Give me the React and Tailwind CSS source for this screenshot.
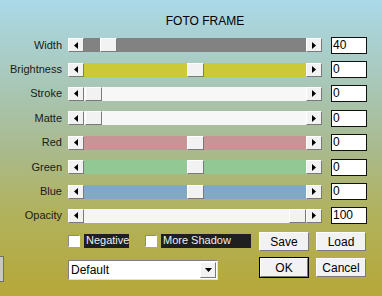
const font = { fontFamily: '"Liberation Sans", Arial, sans-serif' }

const Arrow = ({ dir }) => (
  <svg width="4" height="7" viewBox="0 0 4 7" className="block">
    {dir === 'left' ? <path d="M4 0v7L0 3.5z" fill="#000" /> : <path d="M0 0v7l4-3.5z" fill="#000" />}
  </svg>
)

const Raised = ({ className = '', children }) => (
  <div className={`flex items-center justify-center bg-[#f2f2f2] border-t border-l border-t-white border-l-white border-b border-r border-b-[#7a7a7a] border-r-[#7a7a7a] ${className}`}>
    {children}
  </div>
)

const rows = [
  { label: 'Width', value: '40', track: 'bg-[#828282]', thumb: 16 },
  { label: 'Brightness', value: '0', track: 'bg-[#cbc936]', thumb: 103 },
  { label: 'Stroke', value: '0', track: 'bg-[#f7f7f7]', thumb: 1 },
  { label: 'Matte', value: '0', track: 'bg-[#f7f7f7]', thumb: 1 },
  { label: 'Red', value: '0', track: 'bg-[#c89496]', thumb: 103 },
  { label: 'Green', value: '0', track: 'bg-[#92c894]', thumb: 103 },
  { label: 'Blue', value: '0', track: 'bg-[#82a8c8]', thumb: 103 },
  { label: 'Opacity', value: '100', track: 'bg-[#f5f5f5]', thumb: 205 },
]

const Slider = ({ track, thumb }) => (
  <div className="flex h-[14px] w-[254px]">
    <Raised className="w-[16px] h-full"><Arrow dir="left" /></Raised>
    <div className={`relative flex-1 h-full ${track}`}>
      <div className="absolute top-0 h-full w-[17px]" style={{ left: thumb }}>
        <Raised className="w-full h-full" />
      </div>
    </div>
    <Raised className="w-[16px] h-full"><Arrow dir="right" /></Raised>
  </div>
)

const Check = ({ label, w }) => (
  <div className="flex items-center">
    <div className="w-[12px] h-[12px] bg-white border-t border-l border-t-[#8a8a8a] border-l-[#8a8a8a] border-b border-r border-b-white border-r-white" />
    <span className={`ml-[4px] h-[14px] flex items-center px-[2px] bg-[#1f1f1f] text-[#eeeeee] text-[11px] whitespace-nowrap ${w}`}>{label}</span>
  </div>
)

const Button = ({ children, main }) => (
  <div className={main ? 'border border-black' : ''}>
    <Raised className={`text-[12px] text-black ${main ? 'w-[48px] h-[19px]' : 'w-[50px] h-[19px]'}`}>{children}</Raised>
  </div>
)

export default function App() {
  return (
    <div
      className="relative w-[382px] h-[296px] overflow-hidden bg-[linear-gradient(180deg,#abd9e8_0%,#a8c6b4_30%,#a9ba8e_50%,#b1b25c_72%,#b6a738_100%)]"
      style={font}
    >
      <div className="absolute left-0 top-[256px] w-[4px] h-[26px] bg-[#c8c8c0] border-t border-r border-b border-[#707070]" />
      <div className="pt-[12px] text-center text-[12px] text-black pl-[28px]">FOTO FRAME</div>
      <div className="mt-[3px] flex flex-col">
        {rows.map((r) => (
          <div key={r.label} className="flex items-center h-[24.4px]">
            <div className="w-[62px] text-right text-[11px] text-[#1a1a1a] leading-none">{r.label}</div>
            <div className="ml-[6px]">
              <Slider track={r.track} thumb={r.thumb} />
            </div>
            <div className="ml-[9px] w-[36px] h-[17px] bg-white border border-[#111] text-[12px] leading-[15px] pl-[1px] text-black">
              {r.value}
            </div>
          </div>
        ))}
      </div>
      <div className="flex pl-[68px] pr-[16px] mt-[3px]">
        <div className="flex flex-col">
          <div className="flex items-center gap-[16px] h-[19px]">
            <Check label="Negative" w="w-[45px]" />
            <Check label="More Shadow" w="w-[90px]" />
          </div>
          <div className="mt-[10px] flex w-[150px] h-[20px] bg-white border-t border-l border-t-[#808080] border-l-[#808080] border-b border-r border-b-[#e0e0e0] border-r-[#e0e0e0]">
            <div className="flex-1 text-[12px] text-black pl-[2px] leading-[18px]">Default</div>
            <Raised className="w-[16px] h-[16px] mt-[1px] mr-[1px]">
              <svg width="7" height="4" viewBox="0 0 7 4"><path d="M0 0h7L3.5 4z" fill="#000" /></svg>
            </Raised>
          </div>
        </div>
        <div className="ml-auto flex flex-col">
          <div className="flex gap-[7px] mt-[1px]">
            <Button>Save</Button>
            <Button>Load</Button>
          </div>
          <div className="flex items-center gap-[7px] mt-[6px]">
            <Button main>OK</Button>
            <Button>Cancel</Button>
          </div>
        </div>
      </div>
    </div>
  )
}
